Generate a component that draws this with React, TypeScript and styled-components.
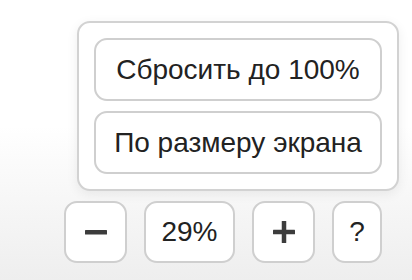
import React from "react";
import styled, { createGlobalStyle } from "styled-components";

const Global = createGlobalStyle`
  html, body { margin: 0; padding: 0; }
  body {
    width: 412px;
    height: 280px;
    overflow: hidden;
    background: linear-gradient(to bottom, #ffffff 0%, #ffffff 45%, #eeeeee 100%);
    font-family: "Liberation Sans", Arial, Helvetica, sans-serif;
    color: #222;
  }
`;

const Page = styled.div`
  display: flex;
  flex-direction: column;
  align-items: flex-start;
  padding: 21px 0 0 64px;
  gap: 10px;
`;

const Panel = styled.div`
  margin-left: 13px;
  width: 322px;
  box-sizing: border-box;
  padding: 15px;
  border: 2px solid #d2d2d2;
  border-radius: 13px;
  background: #fff;
  box-shadow: 0 3px 12px rgba(0, 0, 0, 0.07);
  display: flex;
  flex-direction: column;
  gap: 10px;
`;

const Button = styled.button<{ $w?: number }>`
  box-sizing: border-box;
  height: 62px;
  width: ${(p) => (p.$w ? `${p.$w}px` : "100%")};
  border: 2px solid #cfcfcf;
  border-radius: 13px;
  background: #fff;
  font-family: "Liberation Sans", Arial, Helvetica, sans-serif;
  font-size: 28px;
  color: #222;
  padding: 0;
  display: flex;
  align-items: center;
  justify-content: center;
  cursor: pointer;
`;

const MenuButton = styled(Button)`
  height: 63px;
`;

const Toolbar = styled.div`
  display: flex;
  gap: 17px;
`;

const Icon = styled.svg`
  display: block;
`;

export default function App() {
  return (
    <>
      <Global />
      <Page>
        <Panel>
          <MenuButton>Сбросить до 100%</MenuButton>
          <MenuButton>По размеру экрана</MenuButton>
        </Panel>
        <Toolbar>
          <Button $w={63} aria-label="Уменьшить">
            <Icon width="22" height="22" viewBox="0 0 22 22">
              <rect x="0" y="9" width="22" height="4.5" rx="0.5" fill="#3c3c3c" />
            </Icon>
          </Button>
          <Button $w={91}>29%</Button>
          <Button $w={63} aria-label="Увеличить">
            <Icon width="22" height="22" viewBox="0 0 22 22">
              <rect x="0" y="8.75" width="22" height="4.5" rx="0.5" fill="#3c3c3c" />
              <rect x="8.75" y="0" width="4.5" height="22" rx="0.5" fill="#3c3c3c" />
            </Icon>
          </Button>
          <Button $w={50}>?</Button>
        </Toolbar>
      </Page>
    </>
  );
}
